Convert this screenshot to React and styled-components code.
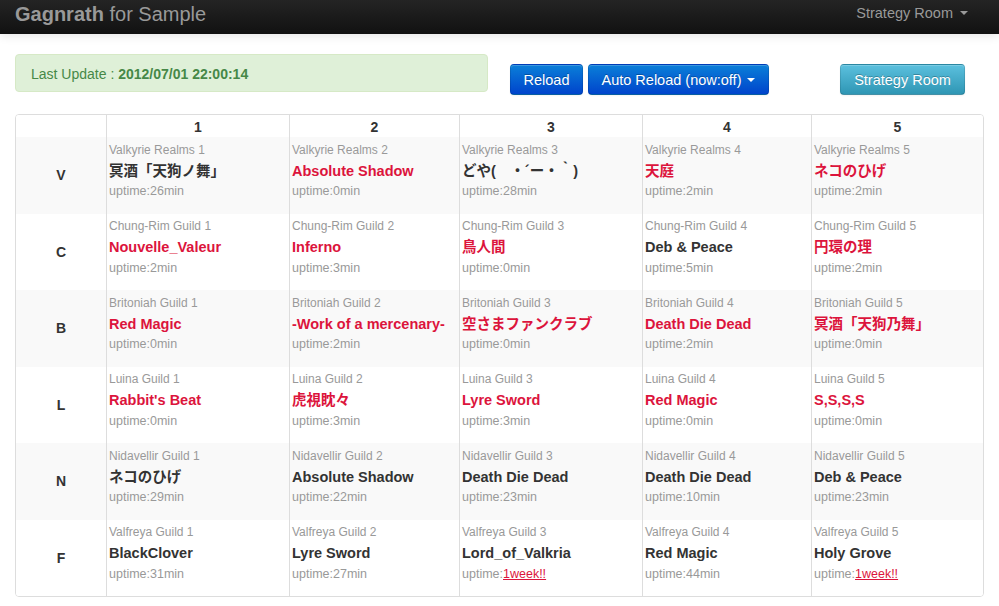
import React from "react";
import styled, { createGlobalStyle } from "styled-components";

const GlobalStyle = createGlobalStyle`
  html, body { margin: 0; padding: 0; background: #fff; }
  body {
    font-family: "Liberation Sans", Arial, "Noto Sans CJK JP", sans-serif;
    font-size: 14px;
    line-height: 20px;
    color: #333;
  }
`;

const Navbar = styled.div`
  height: 34px;
  background: linear-gradient(#242424, #111);
  box-shadow: 0 1px 10px rgba(0, 0, 0, 0.12);
  display: flex;
  align-items: flex-start;
  justify-content: space-between;
  padding: 0 31px 0 15px;
`;

const Brand = styled.div`
  font-size: 20px;
  line-height: 28px;
  color: #999;
  b { font-weight: bold; }
`;

const NavMenu = styled.div`
  font-size: 14.5px;
  line-height: 26px;
  color: #999;
  display: flex;
  align-items: center;
`;

const Caret = styled.span`
  display: inline-block;
  width: 0;
  height: 0;
  margin-left: ${(p) => p.$gap || 6}px;
  border-left: 4px solid transparent;
  border-right: 4px solid transparent;
  border-top: 4px solid ${(p) => p.$color || "#999"};
`;

const Container = styled.div`
  padding: 20px 15px 0;
`;

const TopRow = styled.div`
  display: flex;
  align-items: flex-start;
`;

const Alert = styled.div`
  width: 473px;
  box-sizing: border-box;
  padding: 9px 14px 7px 15px;
  background: #dff0d8;
  border: 1px solid #d6e9c6;
  border-radius: 4px;
  color: #468847;
  font-size: 14px;
  line-height: 20px;
`;

const Button = styled.button`
  font-family: inherit;
  font-size: 14.5px;
  line-height: 20px;
  height: 31px;
  padding: 4px 12px;
  margin: 10px 0 0 ${(p) => p.$ml || 0}px;
  color: #fff;
  text-shadow: 0 -1px 0 rgba(0, 0, 0, 0.25);
  border: 1px solid;
  border-color: rgba(0, 0, 0, 0.1) rgba(0, 0, 0, 0.1) rgba(0, 0, 0, 0.25);
  border-radius: 4px;
  box-shadow: inset 0 1px 0 rgba(255, 255, 255, 0.2), 0 1px 2px rgba(0, 0, 0, 0.05);
  display: inline-flex;
  align-items: center;
  justify-content: center;
  box-sizing: border-box;
  width: ${(p) => (p.$w ? `${p.$w}px` : "auto")};
  background: ${(p) =>
    p.$kind === "info"
      ? "linear-gradient(#5bc0de, #2f96b4)"
      : "linear-gradient(#0a7fd8, #0044cc)"};
`;

const Table = styled.div`
  margin-top: 19px;
  border: 1px solid #ddd;
  border-radius: 4px;
  overflow: hidden;
`;

const Row = styled.div`
  display: grid;
  grid-template-columns: 90px 183px 170px 183px 169px 1fr;
  height: ${(p) => (p.$head ? "22px" : "76.5px")};
  background: ${(p) => (p.$striped ? "#f9f9f9" : "#fff")};
`;

const HeadCell = styled.div`
  border-left: ${(p) => (p.$first ? "none" : "1px solid #ddd")};
  text-align: center;
  font-weight: bold;
  font-size: 14px;
  line-height: 21px;
  padding-top: 2px;
  color: #333;
`;

const LabelCell = styled.div`
  display: flex;
  align-items: center;
  justify-content: center;
  font-weight: bold;
  font-size: 14px;
  color: #333;
`;

const Cell = styled.div`
  border-left: 1px solid #ddd;
  padding: 2.5px 0 0 2px;
  display: flex;
  flex-direction: column;
  min-width: 0;
`;

const Guild = styled.div`
  font-size: 12px;
  line-height: 21px;
  color: #999;
  white-space: nowrap;
`;

const Name = styled.div`
  font-size: 14.5px;
  line-height: 20.5px;
  font-weight: bold;
  color: ${(p) => (p.$red ? "#dc143c" : "#333")};
  white-space: nowrap;
`;

const Uptime = styled.div`
  font-size: 12.5px;
  line-height: 21px;
  color: #999;
  white-space: nowrap;
`;

const WeekLink = styled.a`
  color: #dc143c;
  text-decoration: underline;
`;

const rows = [
  {
    label: "V",
    guild: "Valkyrie Realms",
    cells: [
      ["冥酒「天狗ノ舞」", false, "26min"],
      ["Absolute Shadow", true, "0min"],
      ["どや(　・´ー・｀)", false, "28min"],
      ["天庭", true, "2min"],
      ["ネコのひげ", true, "2min"],
    ],
  },
  {
    label: "C",
    guild: "Chung-Rim Guild",
    cells: [
      ["Nouvelle_Valeur", true, "2min"],
      ["Inferno", true, "3min"],
      ["鳥人間", true, "0min"],
      ["Deb & Peace", false, "5min"],
      ["円環の理", true, "2min"],
    ],
  },
  {
    label: "B",
    guild: "Britoniah Guild",
    cells: [
      ["Red Magic", true, "0min"],
      ["-Work of a mercenary-", true, "2min"],
      ["空さまファンクラブ", true, "0min"],
      ["Death Die Dead", true, "2min"],
      ["冥酒「天狗乃舞」", true, "0min"],
    ],
  },
  {
    label: "L",
    guild: "Luina Guild",
    cells: [
      ["Rabbit's Beat", true, "0min"],
      ["虎視眈々", true, "3min"],
      ["Lyre Sword", true, "3min"],
      ["Red Magic", true, "0min"],
      ["S,S,S,S", true, "0min"],
    ],
  },
  {
    label: "N",
    guild: "Nidavellir Guild",
    cells: [
      ["ネコのひげ", false, "29min"],
      ["Absolute Shadow", false, "22min"],
      ["Death Die Dead", false, "23min"],
      ["Death Die Dead", false, "10min"],
      ["Deb & Peace", false, "23min"],
    ],
  },
  {
    label: "F",
    guild: "Valfreya Guild",
    cells: [
      ["BlackClover", false, "31min"],
      ["Lyre Sword", false, "27min"],
      ["Lord_of_Valkria", false, null],
      ["Red Magic", false, "44min"],
      ["Holy Grove", false, null],
    ],
  },
];

export default function App() {
  return (
    <>
      <GlobalStyle />
      <Navbar>
        <Brand>
          <b>Gagnrath</b> for Sample
        </Brand>
        <NavMenu>
          Strategy Room
          <Caret $gap={7} />
        </NavMenu>
      </Navbar>
      <Container>
        <TopRow>
          <Alert>
            Last Update : <b>2012/07/01 22:00:14</b>
          </Alert>
          <Button $ml={22} $w={73}>Reload</Button>
          <Button $ml={5} $w={181}>
            Auto Reload (now:off)
            <Caret $color="#fff" $gap={6} />
          </Button>
          <Button $ml={71} $w={125} $kind="info">
            Strategy Room
          </Button>
        </TopRow>
        <Table>
          <Row $head>
            <HeadCell $first />
            {[1, 2, 3, 4, 5].map((n) => (
              <HeadCell key={n}>{n}</HeadCell>
            ))}
          </Row>
          {rows.map((r, i) => (
            <Row key={r.label} $striped={i % 2 === 0}>
              <LabelCell>{r.label}</LabelCell>
              {r.cells.map(([name, red, up], j) => (
                <Cell key={j}>
                  <Guild>
                    {r.guild} {j + 1}
                  </Guild>
                  <Name $red={red}>{name}</Name>
                  <Uptime>
                    uptime:{up ? up : <WeekLink href="#">1week!!</WeekLink>}
                  </Uptime>
                </Cell>
              ))}
            </Row>
          ))}
        </Table>
      </Container>
    </>
  );
}
